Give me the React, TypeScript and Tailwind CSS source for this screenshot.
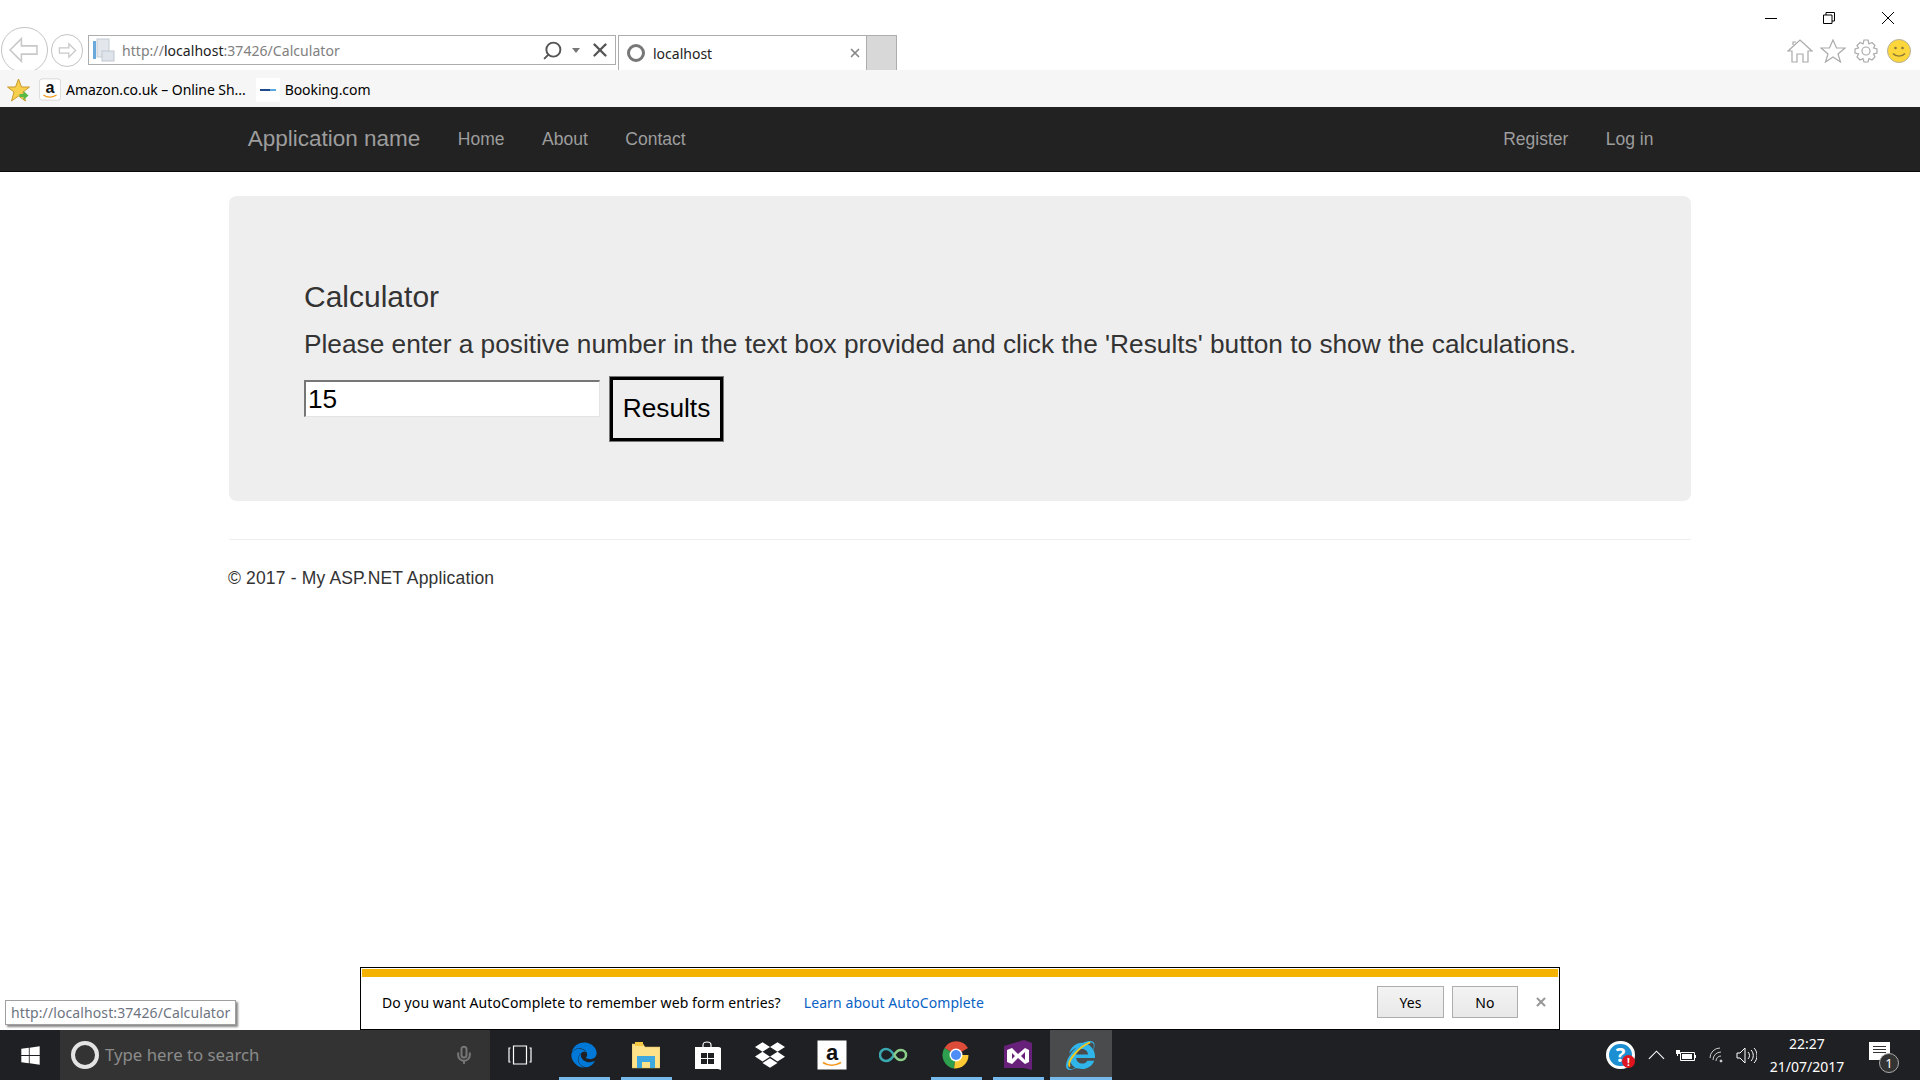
import React from "react";
import { FaDropbox, FaEdge, FaInternetExplorer, FaWindows } from "react-icons/fa";
import { Mic, Search, X } from "lucide-react";

const AmazonTile = ({ small }: { small?: boolean }) => (
  <svg viewBox="0 0 30 30" className={small ? "w-[22px] h-[23px]" : "w-[30px] h-[30px]"}>
    <rect x=".5" y=".5" width="29" height="29" fill="#fff" stroke={small ? "#ccc" : "none"} rx={small ? 4 : 0} />
    <text x="15" y="20" textAnchor="middle" fontFamily="Liberation Sans" fontWeight="700" fontSize="22" fill="#111">a</text>
    <path d="M6 22.500c5 3.500 12 3.500 18 0" stroke="#f39a21" strokeWidth="1.800" fill="none" />
  </svg>
);

const BrowserChrome = () => (
  <div className="shrink-0 font-['Noto_Sans','Open_Sans',sans-serif]">
    <div className="h-[70px] flex items-start overflow-hidden relative">
      <div className="ml-[1px] mt-[27px] w-[47px] h-[46px] rounded-full border border-[#c4c4c4] flex items-center justify-center shrink-0">
        <svg viewBox="0 0 28 24" className="w-[29px] h-[26px] -translate-x-[1px]" fill="none" stroke="#c8c8c8" strokeWidth="1.500">
          <path d="M12 1 1 12l11 11v-7h15V8H12z" />
        </svg>
      </div>
      <div className="ml-[3px] mt-[34px] w-[32px] h-[33px] rounded-full border border-[#c4c4c4] flex items-center justify-center shrink-0">
        <svg viewBox="0 0 28 24" className="w-[19px] h-[17px]" fill="none" stroke="#c8c8c8" strokeWidth="1.800">
          <path d="M16 2l10 10-10 10v-6H2V8h14z" />
        </svg>
      </div>
      <div className="ml-[5px] mt-[35px] w-[528px] h-[30px] border border-[#adadad] flex items-center shrink-0">
        <svg viewBox="0 0 24 24" className="ml-[3px] w-[24px] h-[26px] shrink-0">
          <rect x="5" y="1" width="12" height="18" fill="#e3e7ec" stroke="#c6ccd3" />
          <rect x="1" y="3" width="3" height="18" fill="#6aa9dc" />
          <rect x="10" y="13" width="12" height="10" fill="#dfe4ea" stroke="#c0c7cf" />
        </svg>
        <span className="ml-[6px] text-[14px] tracking-[0.05px] text-[#808080]">
          http://<span className="text-[#222]">localhost</span>:37426/Calculator
        </span>
        <Search className="ml-auto w-[21px] h-[21px] text-[#555] -scale-x-100" strokeWidth={2.2} />
        <span className="ml-[9px] w-0 h-0 border-x-[4px] border-x-transparent border-t-[5px] border-t-[#777]" />
        <X className="ml-[9px] mr-[4px] w-[22px] h-[22px] text-[#555]" strokeWidth={2.6} />
      </div>
      <div className="ml-[2px] mt-[35px] w-[249px] h-[35px] border border-b-0 border-[#adadad] flex items-center shrink-0">
        <span className="ml-[8px] w-[18px] h-[18px] rounded-full border-[3px] border-[#777]" />
        <span className="ml-[8px] text-[14px] text-[#222]">localhost</span>
        <X className="ml-auto mr-[4px] w-[14px] h-[14px] text-[#888]" strokeWidth={3} />
      </div>
      <div className="mt-[35px] w-[30px] h-[35px] bg-[#d8d8d8] border-t border-r border-[#adadad] shrink-0" />
      <div className="ml-auto flex flex-col items-end shrink-0">
        <div className="h-[36px] flex items-center">
          <div className="w-[12px] h-[1px] bg-black mr-[46px]" />
          <svg viewBox="0 0 12 12" className="w-[12px] h-[12px] mr-[47px]" fill="none" stroke="#000">
            <path d="M.5 3h8.500v8.500H.5zM3 3V.5h8.500V9H9" />
          </svg>
          <svg viewBox="0 0 12 12" className="w-[12px] h-[12px] mr-[26px]" fill="none" stroke="#000">
            <path d="M0 0l12 12M12 0 0 12" />
          </svg>
        </div>
        <div className="mt-[3px] flex items-center gap-[7px] mr-[9px]">
          <svg viewBox="0 0 26 24" className="w-[26px] h-[24px]" fill="none" stroke="#aaa" strokeWidth="1.200">
            <path d="M1 12 13 1l12 11h-4v11h-5v-8h-6v8H5V12zM6 6V3h3" />
          </svg>
          <svg viewBox="0 0 26 24" className="w-[26px] h-[24px]" fill="none" stroke="#aaa" strokeWidth="1.200">
            <path d="m13 1 3.500 8H25l-7 6 2.500 8-7.500-5-7.500 5L8 15l-7-6h8.500z" />
          </svg>
          <svg viewBox="0 0 24 24" className="ml-[1px] w-[24px] h-[24px]" fill="none" stroke="#aaa" strokeWidth="1.200">
            <circle cx="12" cy="12" r="4" />
            <path d="M10 1h4l1 4 3-1.500 3 3L19.500 9l3.500 1v4l-3.500 1 1.500 3-3 3-3-1.500-1 3.500h-4l-1-3.500L6 21l-3-3 1.500-3L1 14v-4l3.500-1L3 6.500l3-3L9 5z" />
          </svg>
          <svg viewBox="0 0 24 24" className="w-[24px] h-[24px] ml-[2px]">
            <circle cx="12" cy="12" r="11.500" fill="#fdd63c" stroke="#b5b09a" />
            <circle cx="8.500" cy="9" r="1.300" fill="#8a7a35" />
            <circle cx="15.500" cy="9" r="1.300" fill="#8a7a35" />
            <path d="M6 14.500c3 3.500 9 3.500 12 0" stroke="#8a7a35" strokeWidth="1.400" fill="none" />
          </svg>
        </div>
      </div>
    </div>
    <div className="h-[37px] pt-[2px] bg-[#f6f6f6] flex items-center text-[14px] text-black tracking-[-0.06px]">
      <svg viewBox="0 0 24 24" className="ml-[6px] w-[25px] h-[24px] shrink-0">
        <path d="m12 1 3 8h8l-6.500 5 2.500 9-7-5-7 5 2.500-9L1 9h8z" fill="#f8cf4c" stroke="#c99a2c" />
        <path d="M13 16h4v-3l5 4.500-5 4.500v-3h-4z" fill="#58b947" />
      </svg>
      <div className="ml-[8px] flex shrink-0">
        <AmazonTile small />
      </div>
      <span className="ml-[5px]">Amazon.co.uk – Online Sh...</span>
      <div className="ml-[10px] w-[24px] h-[24px] bg-white flex items-center justify-center shrink-0">
        <div className="w-[16px] h-[2px] bg-[linear-gradient(90deg,#1f4a8c_60%,#57a8e0_60%)]" />
      </div>
      <span className="ml-[5px]">Booking.com</span>
    </div>
  </div>
);

const Navbar = () => (
  <nav className="h-[65px] shrink-0 bg-[#222] border-b border-[#080808] flex justify-center text-[#9d9d9d] font-['Liberation_Sans',sans-serif]">
    <div className="w-[1462px] px-[18.750px] flex items-center text-[17.500px]">
      <span className="text-[22.500px]">Application name</span>
      <a className="ml-[18.750px] px-[18.750px]">Home</a>
      <a className="px-[18.750px]">About</a>
      <a className="px-[18.750px]">Contact</a>
      <a className="ml-auto px-[18.750px]">Register</a>
      <a className="px-[18.750px]">Log in</a>
    </div>
  </nav>
);

const Body = () => (
  <main className="flex-1 min-h-0 flex justify-center text-[#333] font-['Liberation_Sans',sans-serif]">
    <div className="w-[1462px]">
      <section className="mt-[24px] h-[305px] bg-[#eee] rounded-[7.500px] px-[75px] pt-[80px]">
        <h2 className="text-[30px] leading-[42px]">Calculator</h2>
        <p className="mt-[8px] text-[26.250px] leading-[36px]">
          Please enter a positive number in the text box provided and click the 'Results' button to show the calculations.
        </p>
        <div className="mt-[14px] flex items-start">
          <input
            defaultValue="15"
            className="mt-[4px] w-[296px] h-[37px] bg-white pl-[2px] pt-[1px] text-[26.250px] text-black border border-[#e3e3e3] border-t-2 border-l-2 border-t-[#767676] border-l-[#767676] outline-none"
          />
          <button className="mt-[1px] ml-[10px] w-[113px] h-[64px] bg-[#eee] text-[26.250px] text-black border-[3px] border-black outline outline-1 outline-[#767676]">
            Results
          </button>
        </div>
      </section>
      <hr className="mt-[38px] border-[#eee]" />
      <p className="mt-[25px] -ml-[1px] text-[17.500px] tracking-[0.16px]">© 2017 - My ASP.NET Application</p>
    </div>
  </main>
);

const AutoCompleteBar = () => (
  <div className="absolute left-[360px] bottom-[50px] w-[1200px] h-[63px] bg-white border border-black flex flex-col font-['Noto_Sans','Open_Sans',sans-serif] text-[14px]">
    <div className="h-[8px] mt-[1px] mx-[1px] bg-[#f3b300]" />
    <div className="flex-1 flex items-center pl-[21px] pb-[2px] text-black tracking-[0.09px]">
      <span>Do you want AutoComplete to remember web form entries?</span>
      <a className="ml-[23px] text-[#0a62c4]">Learn about AutoComplete</a>
      <button className="ml-auto w-[67px] h-[32px] bg-[linear-gradient(#f3f3f3,#e8e8e8)] border border-[#adadad]">Yes</button>
      <button className="ml-[8px] w-[66px] h-[32px] bg-[linear-gradient(#f3f3f3,#e8e8e8)] border border-[#adadad]">No</button>
      <X className="ml-[16px] mr-[11px] w-[14px] h-[14px] text-[#999]" strokeWidth={3.5} />
    </div>
  </div>
);

const TaskCell = ({ children, on, active }: { children: React.ReactNode; on?: boolean; active?: boolean }) => (
  <div className={`relative w-[62px] h-full flex items-center justify-center pr-[2px] ${active ? "bg-[#4a4b4d]" : ""}`}>
    {children}
    {on && <div className="absolute bottom-0 left-[5px] w-[51px] h-[3px] bg-[#76b9ed]" />}
    {active && <div className="absolute bottom-0 left-0 w-full h-[3px] bg-[#76b9ed]" />}
  </div>
);

const Taskbar = () => (
  <footer className="h-[50px] shrink-0 bg-[#1f2023] flex items-center text-white font-['Noto_Sans','Open_Sans',sans-serif]">
    <div className="w-[60px] flex justify-center">
      <FaWindows className="w-[21px] h-[21px]" />
    </div>
    <div className="w-[430px] h-full bg-[#333] flex items-center">
      <span className="ml-[11px] w-[28px] h-[28px] rounded-full border-[4px] border-[#e3e3e3]" />
      <span className="ml-[6px] text-[16.800px] text-[#8b8b8b]">Type here to search</span>
      <Mic className="ml-auto mr-[16px] w-[20px] h-[24px] text-[#777]" strokeWidth={2.4} />
    </div>
    <div className="w-[64px] flex justify-center pr-[4px]">
      <svg viewBox="0 0 24 20" className="w-[24px] h-[20px]" fill="none" stroke="#fff" strokeWidth="1.200">
        <path d="M5.500 1h13v18h-13zM2.500 3H1v14h1.500M21.500 3H23v14h-1.500" />
      </svg>
    </div>
    <div className="flex h-full">
      <TaskCell on>
        <FaEdge className="w-[26px] h-[26px] text-[#0078d7]" />
      </TaskCell>
      <TaskCell on>
        <svg viewBox="0 0 28 28" className="w-[28px] h-[28px]">
          <path d="M0 3h11l2 3h15v21H0z" fill="#fde28a" stroke="#d9b95c" strokeWidth=".5" />
          <rect x="3" y="1" width="8" height="4" fill="#f6c944" />
          <path d="M5 27V15h18v12h-5v-6h-8v6z" fill="#3fa8df" />
        </svg>
      </TaskCell>
      <TaskCell>
        <svg viewBox="0 0 26 30" className="w-[26px] h-[30px]">
          <path d="M8 8V5c0-4 8-4 8 0v3" stroke="#fff" strokeWidth="1.200" fill="none" />
          <path d="M0 7h24l2 1v22l-3-1H0z" fill="#fff" />
          <path d="M6 13h6v5H6zM13 13h6v5h-6zM6 19h6v5H6zM13 19h6v5h-6z" fill="#1f2023" />
        </svg>
      </TaskCell>
      <TaskCell>
        <FaDropbox className="w-[30px] h-[30px]" />
      </TaskCell>
      <TaskCell>
        <AmazonTile />
      </TaskCell>
      <TaskCell>
        <svg viewBox="0 0 30 16" className="w-[30px] h-[16px]" fill="none" strokeWidth="2.500">
          <path d="M15 8c-3-5-5-6-8-6a6 6 0 0 0 0 12c3 0 5-1 8-6" stroke="#3ba7b0" />
          <path d="M15 8c3-4 4-5 7-5a5 5 0 0 1 0 10c-3 0-4-1-7-5" stroke="#8ccf8a" />
        </svg>
      </TaskCell>
      <TaskCell on>
        <svg viewBox="0 0 28 28" className="w-[28px] h-[28px]">
          <path d="M14 14 2.500 7A13.500 13.500 0 0 1 26 7z" fill="#dd4b39" />
          <path d="M14 14 2.500 7A13.500 13.500 0 0 0 12 27.500z" fill="#2e9e4f" />
          <path d="M14 14h12.500A13.500 13.500 0 0 1 12 27.500z" fill="#fcc934" />
          <circle cx="14" cy="14" r="6.500" fill="#fff" />
          <circle cx="14" cy="14" r="5" fill="#4e8df5" />
        </svg>
      </TaskCell>
      <TaskCell on>
        <svg viewBox="0 0 28 30" className="w-[28px] h-[30px]">
          <path d="M0 6 20 0l8 3v27l-8-2H0z" fill="#68217a" />
          <path d="M3 10l5-2 6 6 7-6 4 2v12l-4 2-7-6-6 6-5-2zM8 13v6l3-3zM21 12l-4 4 4 4z" fill="#fff" fillRule="evenodd" />
        </svg>
      </TaskCell>
      <TaskCell active>
        <div className="relative w-[29px] h-[30px] flex items-center justify-center">
          <FaInternetExplorer className="w-[29px] h-[29px] text-[#2fb5ea]" />
          <svg viewBox="0 0 30 30" className="absolute inset-0 w-full h-full" fill="none">
            <path d="M4 27C0 22 14 6 25 2" stroke="#f3c81f" strokeWidth="2" />
          </svg>
        </div>
      </TaskCell>
    </div>
    <div className="ml-auto flex items-center h-full">
      <div className="relative w-[29px] h-[28px] rounded-full bg-[#1b8fd2] border-[3px] border-white flex items-center justify-center text-[20px] font-bold leading-none">
        ?
        <span className="absolute -right-[3px] -bottom-[2px] w-[13px] h-[13px] rounded-full bg-[#e0141e] text-[10px] flex items-center justify-center">!</span>
      </div>
      <svg viewBox="0 0 18 10" className="ml-[13px] w-[17px] h-[10px]" fill="none" stroke="#fff" strokeWidth="1.200">
        <path d="M1 9l8-8 8 8" />
      </svg>
      <svg viewBox="0 0 20 14" className="ml-[11px] w-[20px] h-[14px]" fill="none" stroke="#fff">
        <path d="M4.500 4.500h14v8h-14zM19.500 7v3" />
        <path d="M6 6h10v5H6zM0 2h4v4H2v2H1V6H0zM1 0v2M3 0v2" fill="#fff" stroke="none" />
      </svg>
      <svg viewBox="0 0 16 16" className="ml-[13px] w-[16px] h-[16px]" fill="none" stroke="#ccc" strokeWidth="1">
        <path d="M1 11a10 10 0 0 1 10-10M4 13a8 8 0 0 1 8-8M7 14a5 5 0 0 1 5-5" />
        <circle cx="12" cy="14" r="1" fill="#fff" />
      </svg>
      <svg viewBox="0 0 21 17" className="ml-[11px] w-[21px] h-[17px]" fill="none" stroke="#fff" strokeWidth="1">
        <path d="M1 6h3l5-5v15l-5-5H1zM12 5c2 2 2 5 0 7M15 3c3 3 3 8 0 11M18 1c4 4 4 11 0 15" />
      </svg>
      <div className="ml-[12px] w-[76px] flex flex-col items-center text-[14px] leading-[23px] whitespace-nowrap">
        <span>22:27</span>
        <span>21/07/2017</span>
      </div>
      <div className="relative ml-[24px] mr-[30px] w-[21px] h-[18px] -mt-[8px] bg-white">
        <div className="mt-[4px] mx-[4px] flex flex-col gap-[2px]">
          <div className="h-[1px] bg-[#333]" />
          <div className="h-[1px] bg-[#333]" />
          <div className="h-[1px] bg-[#333]" />
        </div>
        <span className="absolute -right-[9px] top-[11px] w-[20px] h-[20px] rounded-full bg-[#333] border border-[#aaa] text-[13px] leading-none flex items-center justify-center">1</span>
      </div>
    </div>
  </footer>
);

export default function App() {
  return (
    <div className="relative w-[1920px] h-[1080px] overflow-hidden bg-white flex flex-col">
      <BrowserChrome />
      <Navbar />
      <Body />
      {/* status tooltip and autocomplete prompt sit above the page */}
      <div className="absolute left-[5px] bottom-[55px] h-[25px] px-[5px] bg-white border border-[#a0a0a0] shadow-[2px_2px_2px_#888] flex items-center text-[14px] tracking-[0.1px] text-[#6d7480] font-['Noto_Sans','Open_Sans',sans-serif]">
        http://localhost:37426/Calculator
      </div>
      <AutoCompleteBar />
      <Taskbar />
    </div>
  );
}
